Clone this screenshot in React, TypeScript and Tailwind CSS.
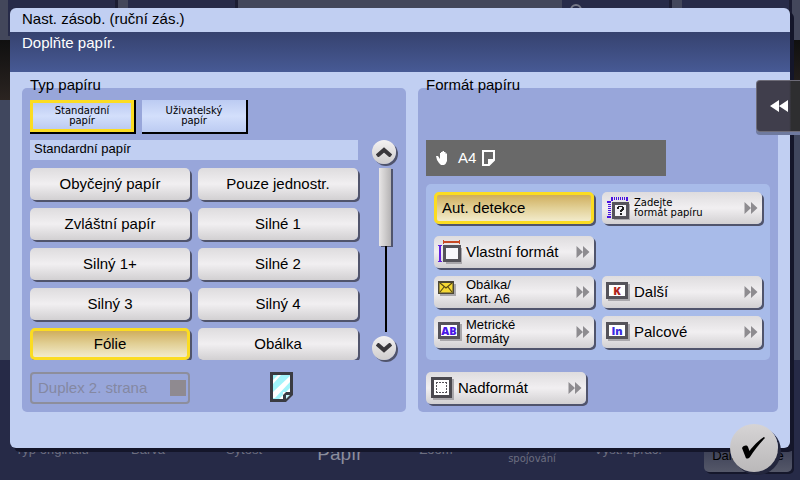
import { useState } from "react";
import type { ReactNode } from "react";

const paperTypes = [
  "Obyčejný papír",
  "Pouze jednostr.",
  "Zvláštní papír",
  "Silné 1",
  "Silný 1+",
  "Silné 2",
  "Silný 3",
  "Silný 4",
  "Fólie",
  "Obálka",
];

const buttonBase =
  "h-8 rounded-[5px] text-[15px] leading-[18px] text-black shadow-[2px_2px_0_#50546c] ";
const buttonPlain =
  "bg-linear-to-b from-[#dedcde] via-[#f1eff1] to-[#d2d0d2]";
const buttonSelected =
  "border-3 border-[#fbdc22] bg-linear-to-b from-[#cfae5c] via-[#e2d096] to-[#f2ebcb]";

function DoubleArrow() {
  return (
    <svg viewBox="0 0 14 12" className="h-3 w-3.5 shrink-0 fill-[#8e8c90]">
      <path d="M0.500 0 L7 6 L0.500 12Z M7 0 L13.500 6 L7 12Z" />
    </svg>
  );
}

function QueryIcon() {
  return (
    <svg viewBox="0 0 24 24" className="h-6 w-6" shapeRendering="crispEdges">
      <path d="M8 8h16v16H8z" fill="#a9a7ab" />
      <path d="M6 6h17v17H6z" fill="#55535a" />
      <path d="M9 9h11v11H9z" fill="#f4f3f6" />
      <path
        d="M6 2.500h16M3.500 6v16"
        stroke="#4a12e0"
        strokeWidth="3"
        strokeDasharray="1 1"
        fill="none"
      />
      <path d="M5 1h2v4H5zM20 1h2v4h-2zM1 5h4v2H1zM1 20h4v2H1z" fill="#4a12e0" />
      <path
        d="M11 13v-2h1v-1h5v1h1v3h-1v1h-1v1h-2v-2h1v-1h1v-2h-3v2zM14 17h2v2h-2z"
        fill="#222"
      />
    </svg>
  );
}

function CustomIcon() {
  return (
    <svg viewBox="0 0 24 24" className="h-6 w-6" shapeRendering="crispEdges">
      <path d="M8 8h16v16H8z" fill="#a9a7ab" />
      <path d="M5 5h18v17H5z" fill="#55535a" />
      <path d="M8 8h12v11H8z" fill="#f8f7fb" />
      <path d="M5 0h1v1h15V0h1v4h-1V3H6v1H5z" fill="#c84a25" />
      <path d="M0 5h4v1H3v15h1v1H0v-1h1V6H0z" fill="#6420dc" />
    </svg>
  );
}

function EnvelopeIcon() {
  return (
    <svg viewBox="0 0 24 24" className="h-6 w-6">
      <path d="M2 4h16v12H2z" fill="#a9a7ab" />
      <path d="M0 1h16v13H0z" fill="#4c4636" />
      <path d="M1.500 3h13v9.500h-13z" fill="#f5d834" />
      <path
        d="M2 3l6 5 6-5M2 12l4-5M14 12l-4-5"
        stroke="#5a4a14"
        strokeWidth="1.200"
        fill="none"
      />
    </svg>
  );
}

function LetterIcon({ text, className }: { text: string; className: string }) {
  return (
    <span className="mb-1 flex h-[17px] w-[22px] items-center justify-center border-3 border-[#55535a] bg-white shadow-[2px_2px_0_#a9a7ab]">
      <span className={`font-['Open_Sans',sans-serif] text-[11px] leading-none font-extrabold ${className}`}>
        {text}
      </span>
    </span>
  );
}

function OversizeIcon() {
  return (
    <svg viewBox="0 0 24 24" className="h-6 w-6" shapeRendering="crispEdges">
      <path d="M3 3h21v21H3z" fill="#a9a7ab" />
      <path d="M1 1h21v21H1z" fill="#4b494f" />
      <path d="M4 4h15v15H4z" fill="#fff" />
      <path
        d="M6 6.500h11M6 16.500h11M6.500 6v11M16.500 6v11"
        stroke="#56545a"
        strokeDasharray="2 1"
      />
    </svg>
  );
}

function SizeButton({
  icon,
  small,
  children,
}: {
  icon: ReactNode;
  small?: string;
  children: ReactNode;
}) {
  return (
    <button className={`${buttonBase} ${buttonPlain} flex w-full items-center pr-1 pl-1 text-left`}>
      <span className="flex h-6 w-6 shrink-0 items-center">{icon}</span>
      <span className={`ml-1 grow whitespace-nowrap ${small ?? ""}`}>{children}</span>
      <DoubleArrow />
    </button>
  );
}

function ScrollButton({ label, d }: { label: string; d: string }) {
  return (
    <button
      aria-label={label}
      className="flex h-6 w-6 items-center justify-center rounded-full bg-linear-to-b from-[#f4f2f2] to-[#cfcdcd] shadow-[2px_2px_0_#50546c]"
    >
      <svg viewBox="0 0 16 10" className="h-2.5 w-4">
        <path d={d} fill="none" stroke="#39373b" strokeWidth="4" />
      </svg>
    </button>
  );
}

function Backdrop() {
  return (
    <div className="absolute inset-0 flex flex-col text-[#6c6e80]">
      <div className="flex h-10 justify-between bg-[#43475b] px-2">
        <div className="flex gap-[10px]">
          <div className="h-9 w-[110px] border-r-3 border-[#1b1d33] bg-[#272b49]" />
          <div className="h-9 w-[110px] border-r-3 border-[#1b1d33] bg-[#272b49]" />
        </div>
        <div className="flex gap-[10px]">
          <div className="h-8 w-[110px] border-r-3 border-[#1b1d33] bg-[#272b49] pt-1 pl-2">
            <div className="h-3 w-3 rounded-full border-2 border-[#777a89]" />
          </div>
          <div className="h-8 w-[110px] border-r-3 border-[#1b1d33] bg-[#272b49]" />
        </div>
      </div>
      <div className="h-[60px] bg-linear-to-b from-[#101010] to-[#2b2421]" />
      <div className="h-[260px] bg-[#40475e]" />
      <div className="grid grow grid-cols-[repeat(7,96fr)_116fr] items-start bg-[#262a47] pt-20 pr-2 pl-1 text-center text-[13px]">
        <span className="leading-5">Typ originálu</span>
        <span className="leading-5">Barva</span>
        <span className="leading-5">Sytost</span>
        <span className="text-[19px] leading-7 text-[#8b8d9c]">Papír</span>
        <span className="leading-5">Zoom</span>
        <span className="mt-1 font-['DejaVu_Sans',sans-serif] text-[10px] leading-[10px]">
          Duplex/
          <br />
          spojování
        </span>
        <span className="leading-5">Výst. zprac.</span>
        <button className="h-8 w-[88px] justify-self-end rounded-[5px] bg-linear-to-b from-[#33374f] to-[#555869] text-[13px] text-black shadow-[2px_2px_0_#15172b]">
          Další funkce
        </button>
      </div>
    </div>
  );
}

export default function App() {
  const [type, setType] = useState("Fólie");
  const [tab, setTab] = useState("Standardní");

  return (
    <div className="relative min-h-screen overflow-hidden font-['Liberation_Sans',Arial,sans-serif] text-black">
      <Backdrop />

      <main className="relative mx-[10px] mt-2 rounded-md bg-[#c1cff2] shadow-[4px_4px_0_#14162a]">
        <h1 className="h-6 pl-3 text-[15px] leading-[22px]">Nast. zásob. (ruční zás.)</h1>
        <p className="h-10 bg-linear-to-b from-[#36426f] to-[#475a95] pl-3 text-[15px] leading-[22px] text-white">
          Doplňte papír.
        </p>

        <div className="grid grid-cols-[384fr_360fr] gap-3 px-3 pt-4 pb-9">
          <section className="rounded-[5px] bg-[#98a6da] px-2 pb-2">
            <h2 className="-mt-[13px] mb-[5px] text-[15px] leading-5">Typ papíru</h2>
            <div className="flex gap-[6px]">
              {["Standardní", "Uživatelský"].map((name) => (
                <button
                  key={name}
                  onClick={() => setTab(name)}
                  className="h-[34px] w-[106px] border-r-2 border-b-2 border-black bg-[#fbdc22] font-['DejaVu_Sans',sans-serif] text-[10px] leading-[10px]"
                >
                  <span
                    className={`flex h-full items-center justify-center bg-linear-to-b from-[#bccbf2] via-[#d3dffb] to-[#bccbf2] ${
                      tab === name ? "border-3 border-[#fbdc22]" : ""
                    }`}
                  >
                    <span>
                      {name}
                      <br />
                      papír
                    </span>
                  </span>
                </button>
              ))}
            </div>

            <div className="mt-[6px] flex">
              <div className="grow">
                <h3 className="h-5 bg-[#c1cff2] pl-1 text-[13px] leading-[18px]">
                  Standardní papír
                </h3>
                <div className="mt-2 -mr-[2px] grid h-48 grid-cols-2 gap-2 overflow-hidden pr-[2px]">
                  {paperTypes.map((name) => (
                    <button
                      key={name}
                      onClick={() => setType(name)}
                      className={`${buttonBase} ${type === name ? buttonSelected : buttonPlain}`}
                    >
                      {name}
                    </button>
                  ))}
                </div>
              </div>
              <div className="ml-[14px] flex w-[26px] flex-col">
                <ScrollButton label="Nahoru" d="M1 9 L8 3 L15 9" />
                <div className="mt-1 ml-[7px] flex grow flex-col items-center self-start">
                  <div className="h-[78px] w-3 bg-linear-to-r from-[#e8e6e6] via-[#cfcdcd] to-[#b5b3b4] shadow-[2px_1px_0_#50546c]" />
                  <div className="mb-1 ml-0.5 w-0.5 grow bg-black" />
                </div>
                <ScrollButton label="Dolů" d="M1 1 L8 7 L15 1" />
              </div>
            </div>

            <div className="mt-3 flex">
              <label className="flex h-8 w-40 items-center justify-between rounded-[4px] border-2 border-[#8d8e9c] pr-[2px] pl-[6px] text-[15px] leading-[18px] text-[#8488a2]">
                Duplex 2. strana
                <input type="checkbox" disabled className="h-4 w-4 appearance-none bg-[#8f8a90]" />
              </label>
              <svg viewBox="0 0 24 30" className="ml-20 h-[30px] w-6">
                <path d="M0 0h23v23l-7 7H0z" fill="#3a3b42" />
                <path d="M3 3h17v17h-7v7H3z" fill="#a2f4fa" />
                <path d="M3 8l5-5h3L3 12zM3 20L20 4v6L5 26H3zM9 27L20 16v4h-7v7z" fill="#fff" />
                <path d="M16 23h4l-4 4z" fill="#c8f6fa" />
              </svg>
            </div>
          </section>

          <section className="rounded-[5px] bg-[#98a6da] px-2 pb-2">
            <h2 className="-mt-[13px] text-[15px] leading-5">Formát papíru</h2>
            <div className="mt-[45px] flex h-9 w-60 items-center bg-[#696969] pl-[10px] text-[15px] leading-9 text-white">
              <svg viewBox="0 0 12 14" className="h-3.5 w-3 fill-white">
                <path d="M0 5 L2 5 L4 8 V2 H5 V1 H6.500 V0 H8 V1 H9.500 V2.500 H11 V10 L9.500 13 L8 14 H5 L3 12 L1 9Z" />
              </svg>
              <span className="ml-[10px]">A4</span>
              <svg viewBox="0 0 13 16" className="ml-[6px] h-4 w-[13px]">
                <path
                  d="M1 1h11v9l-5 5H1zM12 10H7v5"
                  fill="none"
                  stroke="#fff"
                  strokeWidth="2"
                />
                <path d="M7 10h5l-5 5z" fill="#fff" />
              </svg>
            </div>

            <div className="mt-2 rounded-[5px] bg-[#a8bbe9] px-2 pt-2 pb-3">
              <div className="grid grid-cols-2 gap-2">
                <button className={`${buttonBase} ${buttonSelected} pl-[5px] text-left`}>
                  Aut. detekce
                </button>
                <SizeButton
                  icon={<QueryIcon />}
                  small="font-['DejaVu_Sans',sans-serif] text-[10px] leading-[10px]"
                >
                  Zadejte
                  <br />
                  formát papíru
                </SizeButton>
              </div>
              <div className="mt-3 grid grid-cols-2 gap-2">
                <div className="col-span-2 grid grid-cols-2 gap-2">
                  <SizeButton icon={<CustomIcon />}>Vlastní formát</SizeButton>
                </div>
                <SizeButton icon={<EnvelopeIcon />} small="text-[13px] leading-[14px]">
                  Obálka/
                  <br />
                  kart. A6
                </SizeButton>
                <SizeButton icon={<LetterIcon text="K" className="text-[#b0241c]" />}>
                  Další
                </SizeButton>
                <SizeButton
                  icon={<LetterIcon text="AB" className="text-[#4a18e8]" />}
                  small="text-[13px] leading-[14px]"
                >
                  Metrické
                  <br />
                  formáty
                </SizeButton>
                <SizeButton icon={<LetterIcon text="In" className="text-[#3a2ce0]" />}>
                  Palcové
                </SizeButton>
              </div>
            </div>

            <div className="mt-3 w-40">
              <SizeButton icon={<OversizeIcon />}>Nadformát</SizeButton>
            </div>
          </section>
        </div>

        <button
          aria-label="OK"
          className="absolute right-3 -bottom-6 flex h-12 w-12 items-center justify-center rounded-full bg-linear-to-b from-[#d6d4d5] to-[#bab8b9] shadow-[3px_3px_0_#23263d]"
        >
          <svg viewBox="0 0 24 22" className="h-[22px] w-6">
            <path d="M0 11 C2 8 5 8 6 10 L7.500 14 C11 9 17 3 22 0 L23 1 C17 7 12 14 8 20 C6 22 4 22 3.500 20Z" />
          </svg>
        </button>
      </main>

      <button
        aria-label="Zobrazit panel"
        className="absolute top-20 right-0 flex h-[52px] w-11 items-center justify-center rounded-l-[4px] border border-r-0 border-[#6e6c78] bg-linear-to-r from-[#403e4c] from-75% to-[#2e2e30] to-80% shadow-[0_3px_0_#6f7a9f]"
      >
        <svg viewBox="0 0 18 12" className="h-3 w-[18px] fill-white">
          <path d="M9 0 L0 6 L9 12Z M18 0 L9 6 L18 12Z" />
        </svg>
      </button>
    </div>
  );
}
